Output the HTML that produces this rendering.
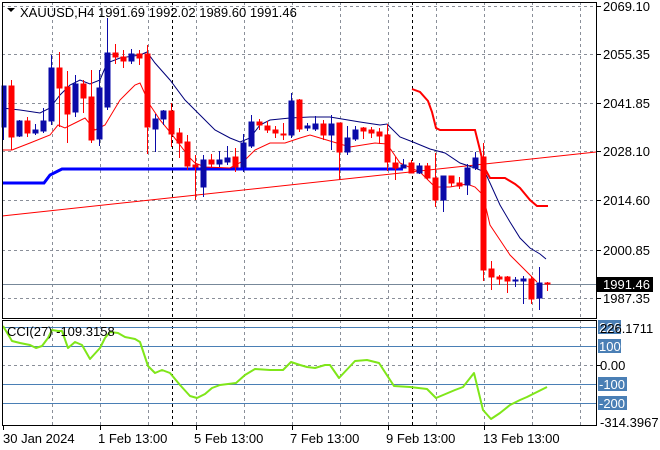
<!DOCTYPE html>
<html><head><meta charset="utf-8"><style>
body{margin:0;background:#fff;}
svg{display:block;font-family:"Liberation Sans",sans-serif;font-size:13px;}
</style></head><body>
<svg width="660" height="450" viewBox="0 0 660 450" xmlns="http://www.w3.org/2000/svg">
<rect width="660" height="450" fill="#fff"/>
<g stroke="#8a8f99" stroke-width="1" stroke-dasharray="3,3" fill="none" shape-rendering="crispEdges">
<path d="M2 6.5H596M2 54.5H596M2 103.5H596M2 151.5H596M2 200.5H596M2 250.5H596M2 298.5H596"/>
<path d="M2 365.5H596"/>
<path d="M52.5 2V318M100.5 2V318M148.5 2V318M196.5 2V318M244.5 2V318M292.5 2V318M340.5 2V318M388.5 2V318M436.5 2V318M484.5 2V318M532.5 2V318M580.5 2V318"/>
<path d="M52.5 320V425M100.5 320V425M148.5 320V425M196.5 320V425M244.5 320V425M292.5 320V425M340.5 320V425M388.5 320V425M436.5 320V425M484.5 320V425M532.5 320V425M580.5 320V425"/>
</g>
<g stroke="#000" stroke-dasharray="3,3" shape-rendering="crispEdges">
<path d="M172.5 2V318M412.5 2V318M172.5 320V425M412.5 320V425"/>
</g>
<path d="M2 284.5H596" stroke="#778899" stroke-width="1" shape-rendering="crispEdges"/>
<path d="M2 216L596 152" stroke="#ff0000" stroke-width="1" fill="none"/>
<path d="M2 183H44L50 175L58 171L62 169H403" stroke="#0000ff" stroke-width="3" fill="none"/>
<path d="M412 89L420 92L428 101L432 112L436 128L440 130H475L480 150L484 167L490 178H505L515 184L520 188L530 200L537 206H548" stroke="#ff0000" stroke-width="2" fill="none"/>
<path d="M2 108L20 110L40 113L50 108L60 95L70 85L80 80L90 84L100 80L107 63L120 58L140 55L147 52L155 63L170 80L185 100L200 115L215 130L230 138L240 142L250 138L260 125L270 120L290 118L310 117L330 117L360 122L380 125L387 124L400 137L413 142L430 149L445 153L460 163L475 168L485 172L490 183L500 205L510 222L520 238L530 248L540 254L546 259" stroke="#00007a" stroke-width="1" fill="none"/>
<path d="M2 150L12 150L30 143L50 135L58 125L65 128L75 123L85 118L95 130L105 125L120 100L135 85L140 83L150 105L160 120L170 132L180 145L190 158L195 163L205 167L230 168L245 160L255 150L270 143L285 143L300 138L310 135L330 141L350 147L375 143L387 144L400 163L420 172L435 187L450 187L467 184L475 187L483 195L490 225L500 240L510 255L520 265L530 275L537 282" stroke="#ff0000" stroke-width="1" fill="none"/>
<g stroke="#0a0aa8" fill="#0a0aa8" shape-rendering="crispEdges">
<path fill="none" d="M3.5 86V140M19.5 120V137M35.5 124V135M43.5 108V133M51.5 55V125M75.5 75V117M99.5 70V146M107.5 18V110M131.5 49V64M155.5 114V152M163.5 110V125M203.5 155V197M219.5 151V167M227.5 146V165M243.5 134V172M251.5 115V148M291.5 93V138M307.5 123V131M315.5 116V131M331.5 115V150M347.5 126V155M355.5 126V141M403.5 159V168M419.5 163V174M443.5 176V212M467.5 164V195M475.5 152V170M515.5 277V287M523.5 276V304M539.5 267V310"/>
<rect x="2" y="86" width="4" height="41"/><rect x="17" y="121" width="5" height="15"/><rect x="33" y="130" width="5" height="3"/><rect x="41" y="121" width="5" height="10"/><rect x="49" y="68" width="5" height="53"/><rect x="73" y="84" width="5" height="28"/><rect x="97" y="88" width="5" height="51"/><rect x="105" y="53" width="5" height="54"/><rect x="129" y="54" width="5" height="7"/><rect x="153" y="119" width="5" height="10"/><rect x="161" y="111" width="5" height="8"/><rect x="201" y="160" width="5" height="27"/><rect x="217" y="160" width="5" height="4"/><rect x="225" y="158" width="5" height="4"/><rect x="241" y="143" width="5" height="24"/><rect x="249" y="122" width="5" height="24"/><rect x="289" y="101" width="5" height="34"/><rect x="305" y="126" width="5" height="2"/><rect x="313" y="124" width="5" height="5"/><rect x="329" y="124" width="5" height="11"/><rect x="345" y="138" width="5" height="14"/><rect x="353" y="130" width="5" height="9"/><rect x="401" y="165" width="5" height="3"/><rect x="417" y="166" width="5" height="7"/><rect x="441" y="176" width="5" height="24"/><rect x="465" y="168" width="5" height="17"/><rect x="473" y="158" width="5" height="10"/><rect x="513" y="280" width="5" height="1"/><rect x="521" y="279" width="5" height="2"/><rect x="537" y="283" width="5" height="15"/>
</g>
<g stroke="#ff0000" fill="#ff0000" shape-rendering="crispEdges">
<path fill="none" d="M11.5 80V150M27.5 117V137M59.5 52V127M67.5 71V143M83.5 80V113M91.5 70V143M115.5 44V64M123.5 50V68M139.5 50V65M147.5 45V154M171.5 103V147M179.5 128V158M187.5 135V170M195.5 155V200M211.5 154V168M235.5 148V172M259.5 119V130M267.5 121V133M275.5 126V138M283.5 123V140M299.5 99V132M323.5 120V140M339.5 123V180M363.5 127V139M371.5 127V138M379.5 128V144M387.5 124V171M395.5 157V180M411.5 160V172M427.5 163V180M435.5 153V207M451.5 176V187M459.5 177V189M483.5 143V281M491.5 261V290M499.5 275V285M507.5 276V293M531.5 276V304M547.5 282V291"/>
<rect x="9" y="86" width="5" height="51"/><rect x="25" y="121" width="5" height="12"/><rect x="57" y="68" width="5" height="20"/><rect x="65" y="87" width="5" height="27"/><rect x="81" y="84" width="5" height="14"/><rect x="89" y="97" width="5" height="43"/><rect x="113" y="53" width="5" height="4"/><rect x="121" y="57" width="5" height="4"/><rect x="137" y="54" width="5" height="4"/><rect x="145" y="54" width="5" height="73"/><rect x="169" y="111" width="5" height="23"/><rect x="177" y="133" width="5" height="10"/><rect x="185" y="142" width="5" height="24"/><rect x="193" y="165" width="5" height="2"/><rect x="209" y="160" width="5" height="4"/><rect x="233" y="157" width="5" height="10"/><rect x="257" y="122" width="5" height="3"/><rect x="265" y="126" width="5" height="4"/><rect x="273" y="130" width="5" height="3"/><rect x="281" y="134" width="5" height="1"/><rect x="297" y="100" width="5" height="29"/><rect x="321" y="124" width="5" height="11"/><rect x="337" y="123" width="5" height="29"/><rect x="361" y="128" width="5" height="3"/><rect x="369" y="130" width="5" height="3"/><rect x="377" y="132" width="5" height="4"/><rect x="385" y="135" width="5" height="27"/><rect x="393" y="163" width="5" height="5"/><rect x="409" y="163" width="5" height="10"/><rect x="425" y="166" width="5" height="12"/><rect x="433" y="178" width="5" height="22"/><rect x="449" y="176" width="5" height="7"/><rect x="457" y="183" width="5" height="3"/><rect x="481" y="157" width="5" height="113"/><rect x="489" y="269" width="5" height="8"/><rect x="497" y="277" width="5" height="2"/><rect x="505" y="277" width="5" height="4"/><rect x="529" y="279" width="5" height="20"/><rect x="545" y="283" width="5" height="1"/>
</g>
<g stroke="#4a7fb5" stroke-width="1" shape-rendering="crispEdges">
<path d="M2 327.5H596M2 346.5H596M2 384.5H596M2 403.5H596"/>
</g>
<path d="M3 326L12 341L20 343L30 345L36 348L42 346L48 338L52 330L58 331L62 331L68 348L75 342L82 345L90 359L100 348L105 338L110 332L118 333L125 337L135 339L140 342L148 366L155 373L162 370L170 373L180 385L190 396L197 398L205 394L212 388L220 385L236 383L245 375L255 369L270 370L283 370L291 362L300 365L307 367L315 368L325 365L330 365L339 378L355 361L367 360L379 363L394 386L410 387L427 389L436 398L455 390L463 387L474 373L483 410L491 419L500 413L510 405L520 400L527 397L537 392L547 387" stroke="#7fe619" stroke-width="2" fill="none" stroke-linejoin="round"/>
<g stroke="#000" fill="none" shape-rendering="crispEdges">
<rect x="2.5" y="2.5" width="594" height="316"/>
<rect x="2.5" y="320.5" width="594" height="105"/>
</g>
<g stroke="#000" shape-rendering="crispEdges">
<path d="M597 6.5H601M597 54.5H601M597 103.5H601M597 151.5H601M597 200.5H601M597 250.5H601M597 298.5H601M597 365.5H601"/>
<path d="M3.5 426V430M100.5 426V430M196.5 426V430M292.5 426V430M388.5 426V430M484.5 426V430"/>
</g>
<g fill="#000">
<text x="603" y="11">2069.10</text>
<text x="603" y="59">2055.35</text>
<text x="603" y="108">2041.85</text>
<text x="603" y="156">2028.10</text>
<text x="603" y="205">2014.60</text>
<text x="603" y="255">2000.85</text>
<text x="603" y="303">1987.35</text>
</g>
<rect x="597" y="277" width="56" height="15" fill="#000"/>
<text x="603" y="289" fill="#fff">1991.46</text>
<g fill="#4a7fb5">
<rect x="598" y="320" width="23" height="14"/>
<rect x="598" y="339" width="23" height="14"/>
<rect x="598" y="377" width="29" height="14"/>
<rect x="598" y="396" width="29" height="14"/>
</g>
<g fill="#fff">
<text x="599" y="332">226</text>
<text x="599" y="351">100</text>
<text x="599" y="389">-100</text>
<text x="599" y="408">-200</text>
</g>
<g fill="#000">
<text x="600" y="333">226.1711</text>
<text x="600" y="370">0.00</text>
<text x="600" y="427">-314.3967</text>
</g>
<path d="M7 8H15L11 12Z" fill="#000"/>
<text x="20" y="17" fill="#000">XAUUSD,H4  1991.69 1992.02 1989.60 1991.46</text>
<text x="7" y="336" fill="#000">CCI(27) -109.3158</text>
<g fill="#000">
<text x="3" y="443">30 Jan 2024</text>
<text x="98" y="443">1 Feb 13:00</text>
<text x="194" y="443">5 Feb 13:00</text>
<text x="290" y="443">7 Feb 13:00</text>
<text x="386" y="443">9 Feb 13:00</text>
<text x="483" y="443">13 Feb 13:00</text>
</g>
</svg>
</body></html>
